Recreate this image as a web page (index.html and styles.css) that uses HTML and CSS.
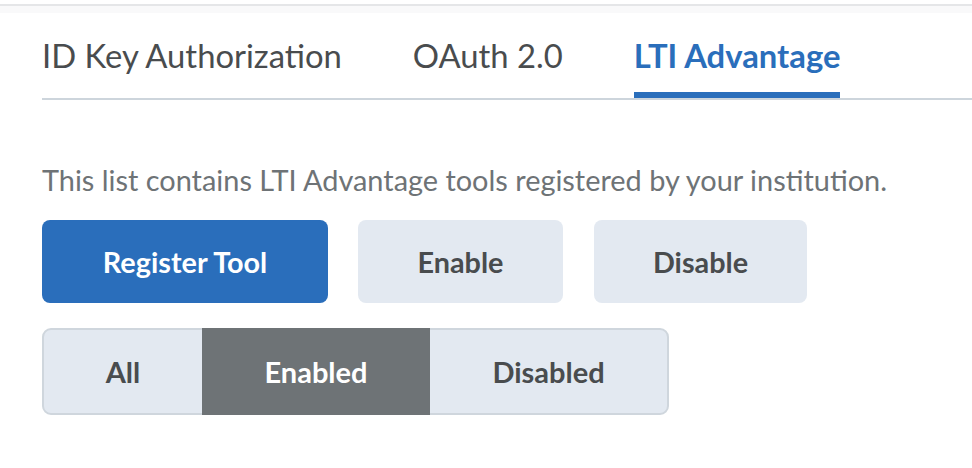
FILE: index.html
```html
<!DOCTYPE html>
<html lang="en">
<head>
<meta charset="utf-8">
<title>LTI Advantage</title>
<link rel="stylesheet" href="styles.css">
</head>
<body>
<div class="topbar"></div>
<main class="content">
  <nav class="tabs">
    <div class="tab">ID Key Authorization</div>
    <div class="tab">OAuth 2.0</div>
    <div class="tab active">LTI Advantage</div>
  </nav>
  <p class="desc">This list contains LTI Advantage tools registered by your institution.</p>
  <div class="actions">
    <button class="btn primary register">Register Tool</button>
    <button class="btn enable">Enable</button>
    <button class="btn disable">Disable</button>
  </div>
  <div class="segmented">
    <button class="seg seg-all">All</button>
    <button class="seg seg-enabled selected">Enabled</button>
    <button class="seg seg-disabled">Disabled</button>
  </div>
</main>
</body>
</html>
```
FILE: styles.css
```css
* { box-sizing: border-box; }
html, body { margin: 0; padding: 0; background: #fff; }
body { font-family: Lato, "Noto Sans", sans-serif; color: #494c4e; }

.topbar {
  margin-top: 4px;
  height: 9px;
  border-top: 2px solid #e5e6e8;
  background: #f9f9fa;
}

.content { padding-left: 42px; }

.tabs {
  display: flex;
  gap: 71px;
  border-bottom: 2px solid #cdd5dc;
  height: 87px;
  padding-top: 25px;
}
.tab {
  font-size: 32.8px;
  line-height: 36px;
  color: #494c4e;
  position: relative;
  white-space: nowrap;
}
.tab.active { color: #2a6ebb; font-weight: 700; }
.tab.active::after {
  content: "";
  position: absolute;
  left: 0; right: 0;
  top: 54px;
  height: 6px;
  background: #2a6ebb;
}

.desc {
  margin: 65px 0 0;
  font-size: 28.9px;
  line-height: 30px;
  color: #6e7376;
  white-space: nowrap;
}

.actions {
  display: flex;
  gap: 30px;
  margin-top: 25px;
}
.btn {
  height: 83px;
  border: none;
  border-radius: 8px;
  font-family: inherit;
  font-size: 28.8px;
  font-weight: 700;
  color: #494c4e;
  background: #e3e9f1;
  padding: 0;
}
.btn.primary { background: #2a6ebb; color: #fff; }
.register { width: 286px; }
.enable { width: 205px; }
.disable { width: 213px; margin-left: 1px; }

.segmented {
  display: inline-flex;
  margin-top: 25px;
  height: 87px;
  border: 2px solid #cfd6dd;
  border-radius: 9px;
  background: #e3e9f1;
}
.seg {
  border: none;
  background: transparent;
  font-family: inherit;
  font-size: 29px;
  font-weight: 700;
  color: #494c4e;
  padding: 0;
  height: 100%;
}
.seg-all { width: 158px; }
.seg-enabled { width: 228px; }
.seg-disabled { width: 237px; }
.seg.selected {
  background: #6e7376;
  color: #fff;
  margin: -2px 0;
  height: calc(100% + 4px);
}
```
